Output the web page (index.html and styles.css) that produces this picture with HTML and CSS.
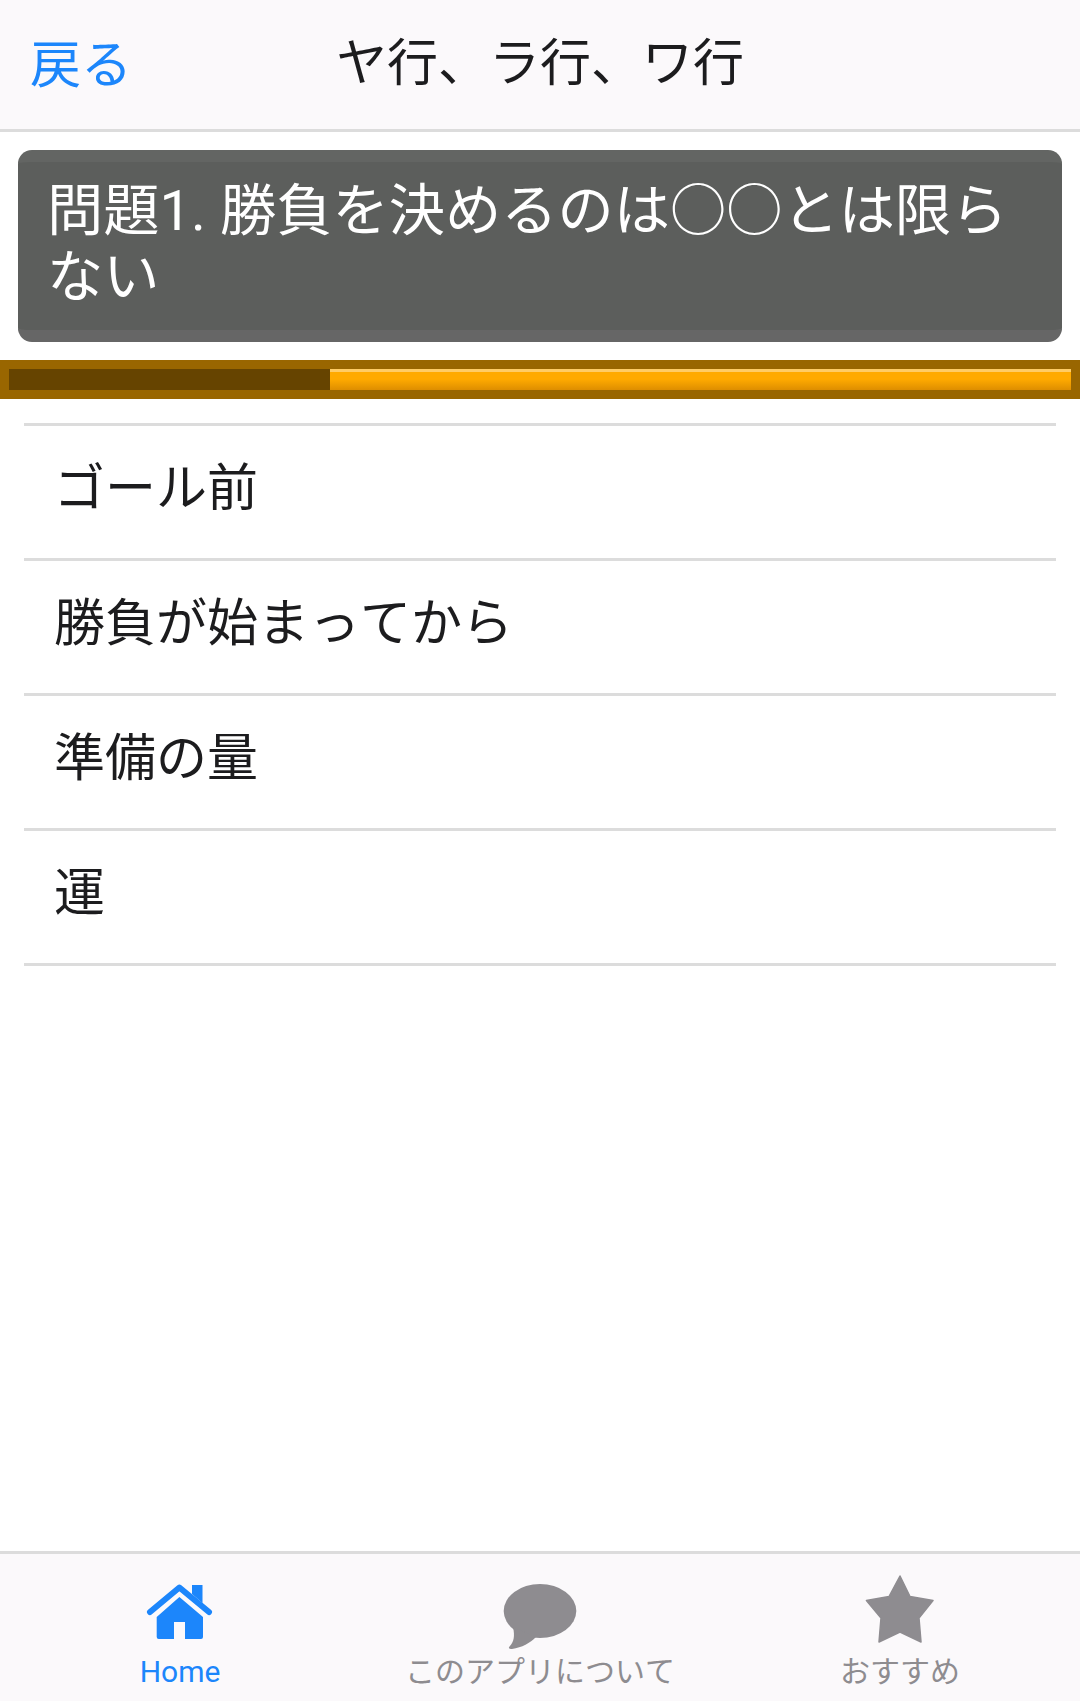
FILE: index.html
```html
<!DOCTYPE html>
<html lang="ja">
<head>
<meta charset="utf-8">
<title>ヤ行、ラ行、ワ行</title>
<link rel="stylesheet" href="styles.css">
</head>
<body>
<div class="app">
  <header class="nav">
    <a class="back">戻る</a>
    <h1 class="title">ヤ行、ラ行、ワ行</h1>
    <span></span>
  </header>
  <main class="content">
    <div class="question">問題1. 勝負を決めるのは○○とは限らない</div>
    <div class="progress"><div class="track"><div class="fill"></div></div></div>
    <ul class="answers">
      <li>ゴール前</li>
      <li>勝負が始まってから</li>
      <li>準備の量</li>
      <li>運</li>
    </ul>
  </main>
  <nav class="tabs">
    <a class="tab active">
      <svg class="icon" viewBox="0 0 80 80">
        <path d="M10 40 L39.4 15.5 L69 40" fill="none" stroke="currentColor" stroke-width="6" stroke-linecap="round" stroke-linejoin="round"/>
        <path d="M52 13 H62.5 V31 L52 22 Z" fill="currentColor"/>
        <path fill-rule="evenodd" fill="currentColor" d="M39.4 25 L63 45 V65 Q63 67 61 67 H45 V50 H34 V67 H18.7 Q16.7 67 16.7 65 V45 Z"/>
      </svg>
      <span class="label">Home</span>
    </a>
    <a class="tab">
      <svg class="icon" viewBox="0 0 80 80">
        <ellipse cx="40" cy="39" rx="36.3" ry="27" fill="currentColor"/>
        <path d="M13 55 C15 64 14 70 9.5 74.5 C8 76 9.5 77.5 12 77 C22 75.5 30 71 36 65 Z" fill="currentColor"/>
      </svg>
      <span class="label">このアプリについて</span>
    </a>
    <a class="tab">
      <svg class="icon" viewBox="0 0 80 80">
        <path d="M40 4 L50 24.5 L73 28.6 L59 46 L61 70 L40 60 L19 70 L21 46 L6.4 28.6 L29 24.5 Z" fill="currentColor" stroke="currentColor" stroke-width="1.5" stroke-linejoin="round"/>
      </svg>
      <span class="label">おすすめ</span>
    </a>
  </nav>
</div>
</body>
</html>
```
FILE: styles.css
```css
* { box-sizing: border-box; }
html, body { margin: 0; padding: 0; }
body {
  background: #fff;
  color: #1c1c1e;
  font-family: Roboto, "Noto Sans CJK JP", sans-serif;
  font-kerning: none;
}
.app {
  display: flex;
  flex-direction: column;
  height: 1701px;
}
.nav {
  display: grid;
  grid-template-columns: 1fr auto 1fr;
  align-items: center;
  height: 132px;
  padding: 0 30px 2px;
  background: #fbf9fb;
  border-bottom: 3px solid #dcdcdc;
}
.back {
  color: #1c86fb;
  font-size: 51px;
  line-height: 60px;
  padding-top: 4px;
}
.title {
  margin: 0;
  font-size: 51px;
  font-weight: 400;
  line-height: 60px;
}
.content {
  flex: 1;
  padding-top: 18px;
}
.question {
  margin: 0 18px;
  height: 192px;
  padding: 16px 30px 0 29px;
  background: #5c5e5c;
  border-top: 12px solid #636563;
  border-bottom: 12px solid #666666;
  border-radius: 14px;
  color: #fff;
  font-size: 56.25px;
  line-height: 66px;
}
.progress {
  margin-top: 18px;
  height: 39px;
  padding: 9px;
  background: #996600;
}
.track {
  height: 21px;
  background: #664400;
}
.fill {
  margin-left: 321px;
  width: 741px;
  height: 21px;
  background: linear-gradient(#ffaa00, #ffaa00 40%, #de8e00);
  border-top: 3px solid #ffcc66;
}
.answers {
  list-style: none;
  margin: 24px 24px 0;
  padding: 0;
  border-top: 3px solid #dcdcdc;
}
.answers li {
  height: 135px;
  padding: 30px 30px 0;
  border-bottom: 3px solid #dcdcdc;
  font-size: 51px;
  line-height: 66px;
}
.tabs {
  display: grid;
  grid-template-columns: repeat(3, 1fr);
  height: 150px;
  background: #fbf9fb;
  border-top: 3px solid #dcdcdc;
}
.tab {
  display: flex;
  flex-direction: column;
  align-items: center;
  padding-top: 18px;
  color: #8e8c90;
}
.tab.active { color: #1c86fb; }
.icon {
  display: block;
  width: 80px;
  height: 80px;
}
.label {
  font-size: 30px;
  line-height: 39px;
}
```
